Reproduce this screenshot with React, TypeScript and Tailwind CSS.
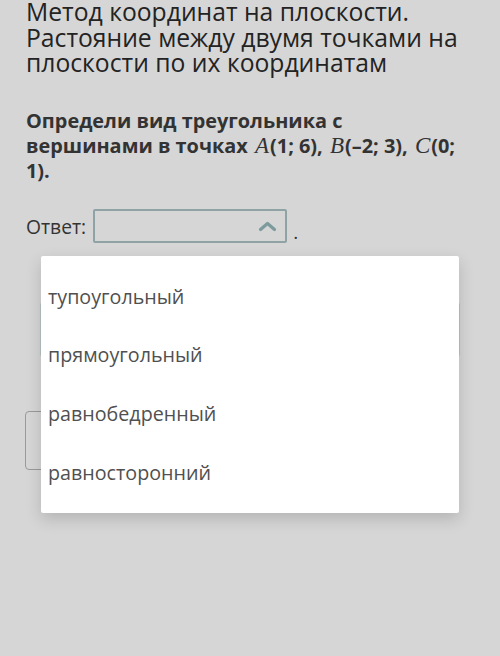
import React from "react";

export default function App() {
  const items = ["тупоугольный", "прямоугольный", "равнобедренный", "равносторонний"];
  const mathFont = { fontFamily: '"Liberation Serif", "DejaVu Serif", serif' };
  return (
    <div
      className="relative w-[500px] h-[656px] overflow-hidden bg-[#d6d6d6]"
      style={{ fontFamily: '"Open Sans", "Noto Sans", sans-serif' }}
    >
      <div className="pl-[26px]">
        <h1 className="-mt-[1px] w-[460px] text-[24.7px] leading-[25.5px] font-normal text-[#232323]">
          Метод координат на плоскости. Растояние между двумя точками на плоскости по их координатам
        </h1>
        <p className="mt-[32px] w-[440px] text-[19.9px] leading-[25px] font-bold text-[#333]">
          Определи вид треугольника с вершинами в точках{" "}
          <span className="font-normal italic text-[23px] leading-[20px] pl-[2px] pr-[1px]" style={mathFont}>A</span>
          (1; 6),{" "}
          <span className="font-normal italic text-[23px] leading-[20px] pl-[2px] pr-[1px]" style={mathFont}>B</span>
          (–2; 3),{" "}
          <span className="font-normal italic text-[23px] leading-[20px] pl-[2px] pr-[1px]" style={mathFont}>C</span>
          (0; 1).
        </p>
        <div className="mt-[26.5px] h-[34px] flex items-center">
          <span className="text-[19.3px] leading-[25px] text-[#333]">Ответ:</span>
          <div className="ml-[7px] w-[194px] h-[34px] rounded-[2px] border-2 border-[#8fa3a4] flex items-center justify-end pr-[8px]">
            <svg width="19" height="11" viewBox="0 0 19 11">
              <path d="M2.5 8.5 L9.5 2.5 L16.5 8.5" fill="none" stroke="#7d9a9c" strokeWidth="3.2" strokeLinecap="round" strokeLinejoin="round" />
            </svg>
          </div>
          <span className="ml-[6px] mt-[12px] text-[19px] text-[#333]">.</span>
        </div>
      </div>
      <div className="mt-[58px] ml-[40px] w-[420px] h-[57px] rounded-[4px] border border-[#b9c4c4]" />
      <div className="mt-[53px] ml-[25px] w-[200px] h-[59px] rounded-[4px] border border-[#9a9a9a]" />

      <div className="absolute left-[41px] top-[256px] w-[418px] h-[257px] bg-white rounded-[2px] shadow-[0_6px_16px_rgba(0,0,0,0.16)] pt-[11px]">
        {items.map((t) => (
          <div key={t} className="h-[58.7px] flex items-center pl-[7px] text-[19.7px] text-[#505050]">
            {t}
          </div>
        ))}
      </div>
    </div>
  );
}
